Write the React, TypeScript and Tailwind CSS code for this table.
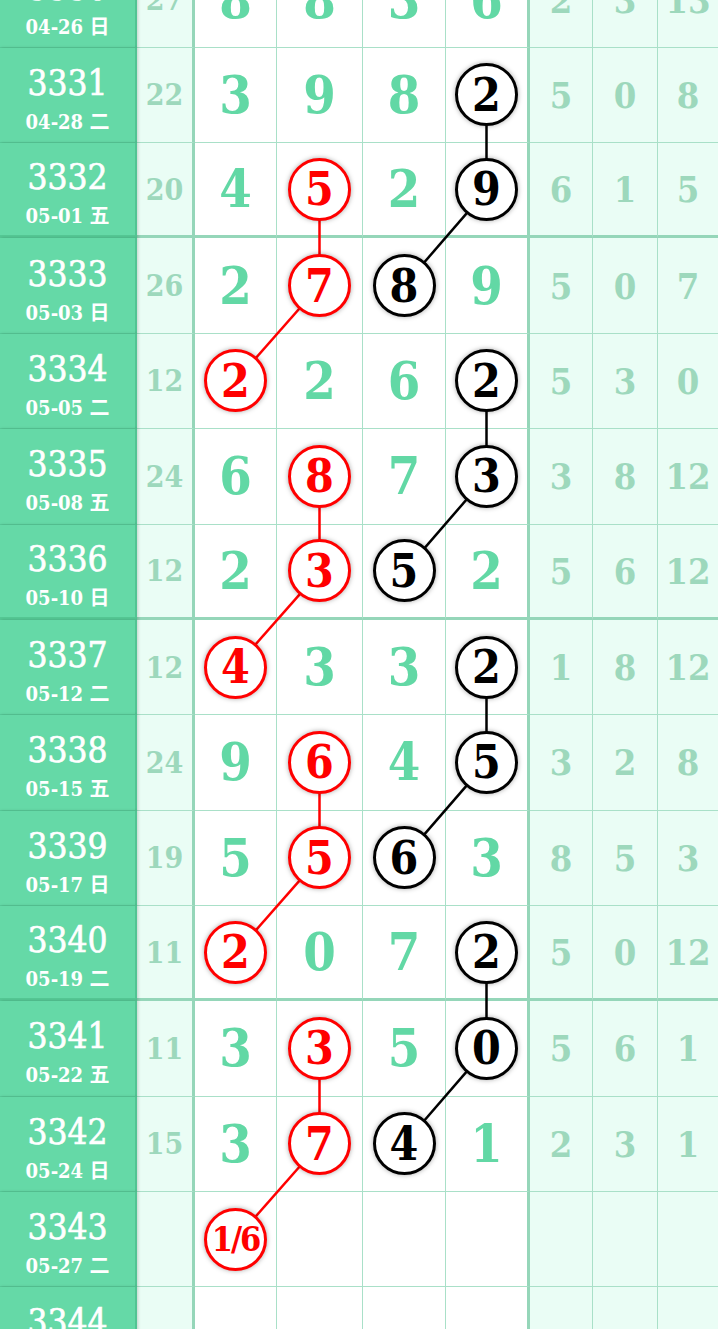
import React from "react";

type Row = {
  id: string;
  date: string;
  s: string;
  d: string[];
  r: string[];
  red?: number;
  black?: number;
};

const rows: Row[] = [
  { id: "3330", date: "04-26 日", s: "27", d: ["8", "8", "3", "6"], r: ["2", "3", "13"] },
  { id: "3331", date: "04-28 二", s: "22", d: ["3", "9", "8", "2"], r: ["5", "0", "8"], black: 3 },
  { id: "3332", date: "05-01 五", s: "20", d: ["4", "5", "2", "9"], r: ["6", "1", "5"], red: 1, black: 3 },
  { id: "3333", date: "05-03 日", s: "26", d: ["2", "7", "8", "9"], r: ["5", "0", "7"], red: 1, black: 2 },
  { id: "3334", date: "05-05 二", s: "12", d: ["2", "2", "6", "2"], r: ["5", "3", "0"], red: 0, black: 3 },
  { id: "3335", date: "05-08 五", s: "24", d: ["6", "8", "7", "3"], r: ["3", "8", "12"], red: 1, black: 3 },
  { id: "3336", date: "05-10 日", s: "12", d: ["2", "3", "5", "2"], r: ["5", "6", "12"], red: 1, black: 2 },
  { id: "3337", date: "05-12 二", s: "12", d: ["4", "3", "3", "2"], r: ["1", "8", "12"], red: 0, black: 3 },
  { id: "3338", date: "05-15 五", s: "24", d: ["9", "6", "4", "5"], r: ["3", "2", "8"], red: 1, black: 3 },
  { id: "3339", date: "05-17 日", s: "19", d: ["5", "5", "6", "3"], r: ["8", "5", "3"], red: 1, black: 2 },
  { id: "3340", date: "05-19 二", s: "11", d: ["2", "0", "7", "2"], r: ["5", "0", "12"], red: 0, black: 3 },
  { id: "3341", date: "05-22 五", s: "11", d: ["3", "3", "5", "0"], r: ["5", "6", "1"], red: 1, black: 3 },
  { id: "3342", date: "05-24 日", s: "15", d: ["3", "7", "4", "1"], r: ["2", "3", "1"], red: 1, black: 2 },
  { id: "3343", date: "05-27 二", s: "", d: ["1/6", "", "", ""], r: ["", "", ""], red: 0 },
  { id: "3344", date: "05-29 五", s: "", d: ["", "", "", ""], r: ["", "", ""] },
];

const H = 95.36;
const X = [235.5, 319.5, 404, 486.5];

// pairs of row indexes joined by a line
const redLinks = [[2, 3], [3, 4], [5, 6], [6, 7], [8, 9], [9, 10], [11, 12], [12, 13]];
const blackLinks = [[1, 2], [2, 3], [4, 5], [5, 6], [7, 8], [8, 9], [10, 11], [11, 12]];

const digitW = [
  "w-[82px] border-r border-r-[#a9e0c8]",
  "w-[86px] border-r border-r-[#a9e0c8]",
  "w-[83px] border-r border-r-[#a9e0c8]",
  "w-[84px] border-r-[3px] border-r-[#95d6b9]",
];
const rightW = [
  "w-[63px] border-r border-r-[#a9e0c8]",
  "w-[65px] border-r border-r-[#a9e0c8]",
  "flex-1",
];

function Ball({ text, red }: { text: string; red: boolean }) {
  return (
    <div
      className={`relative z-10 flex h-[63px] w-[63px] items-center justify-center rounded-full border-[3px] bg-white font-bold leading-none shadow-[0_0_5px_rgba(0,0,0,0.35)] ${
        red ? "border-[#ff0000] text-[#ff0000]" : "border-black text-black"
      } ${text.length > 1 ? "text-[34px] tracking-[-2px]" : "text-[46px]"}`}
    >
      {text}
    </div>
  );
}

export default function App() {
  return (
    <div className="h-[1329px] w-[718px] overflow-hidden bg-white font-['DejaVu_Serif_Condensed','DejaVu_Serif','Noto_Sans_CJK_SC',serif]">
      <div className="relative mt-[-47.66px]">
        {rows.map((row, i) => {
          const thick = i % 4 === 2;
          const bb = thick
            ? "border-b-[3px] border-b-[#95d6b9]"
            : "border-b border-b-[#a9e0c8]";
          return (
            <div key={row.id} className="flex h-[95.36px]">
              {/* 期号 */}
              <div
                className={`relative z-20 flex w-[137px] shrink-0 flex-col items-center justify-center bg-[#65d9a7] pt-[8px] text-white border-r-2 border-r-[#52c493] shadow-[1px_0_3px_rgba(0,0,0,0.18)] ${
                  thick ? "border-b-[3px] border-b-[#55c895]" : "border-b border-b-[#58cb99]"
                }`}
              >
                <div className="text-[35px] leading-[38px] [-webkit-text-stroke:0.6px_#fff]">{row.id}</div>
                <div className="mt-[8px] text-[20px] font-semibold leading-[24px]">{row.date}</div>
              </div>

              {/* 和值 */}
              <div
                className={`flex w-[58px] shrink-0 items-center justify-center bg-[#eafdf5] border-r-[3px] border-r-[#95d6b9] text-[30px] font-bold text-[#9dd8bc] ${bb}`}
              >
                {row.s}
              </div>

              {/* 号码 */}
              {row.d.map((v, c) => (
                <div
                  key={c}
                  className={`flex shrink-0 items-center justify-center bg-white ${digitW[c]} ${bb}`}
                >
                  {row.red === c ? (
                    <Ball text={v} red />
                  ) : row.black === c ? (
                    <Ball text={v} red={false} />
                  ) : (
                    <span className="text-[52px] font-bold leading-none text-[#62d8a5]">{v}</span>
                  )}
                </div>
              ))}

              {/* 右侧 */}
              {row.r.map((v, c) => (
                <div
                  key={c}
                  className={`flex items-center justify-center bg-[#eafdf5] text-[36px] font-bold leading-none text-[#9dd8bc] ${rightW[c]} ${bb}`}
                >
                  {v}
                </div>
              ))}
            </div>
          );
        })}

        {/* 连线 */}
        <svg className="pointer-events-none absolute left-0 top-0 z-[5]" width="718" height={rows.length * H}>
          {redLinks.map(([a, b]) => (
            <line
              key={"r" + a}
              x1={X[rows[a].red!]}
              y1={a * H + H / 2}
              x2={X[rows[b].red!]}
              y2={b * H + H / 2}
              stroke="#ff0000"
              strokeWidth="2.5"
            />
          ))}
          {blackLinks.map(([a, b]) => (
            <line
              key={"b" + a}
              x1={X[rows[a].black!]}
              y1={a * H + H / 2}
              x2={X[rows[b].black!]}
              y2={b * H + H / 2}
              stroke="#000"
              strokeWidth="2.5"
            />
          ))}
        </svg>
      </div>
    </div>
  );
}
